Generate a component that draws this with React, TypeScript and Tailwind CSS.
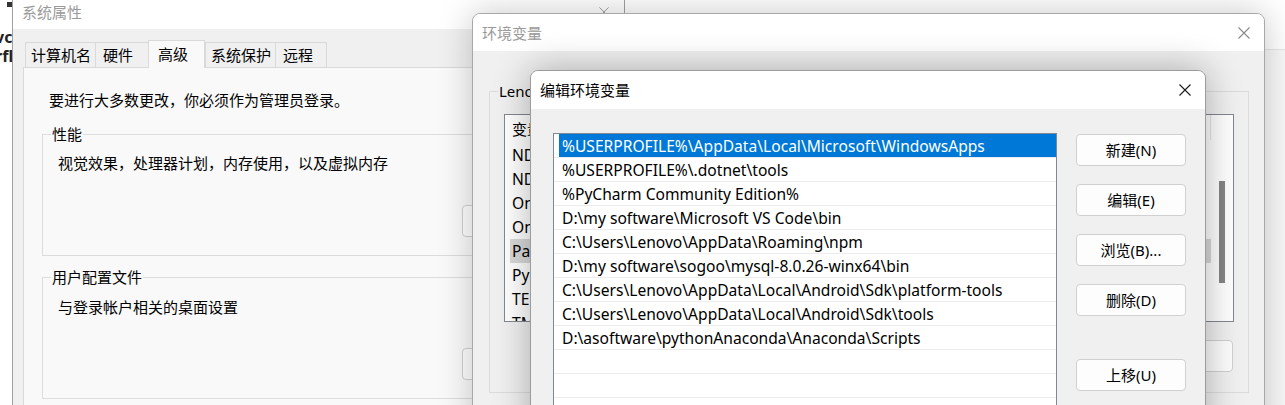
import type { ReactNode } from 'react';

function CloseX({ color, size = 12 }: { color: string; size?: number }) {
  return (
    <svg width={size} height={size} viewBox="0 0 12 12" fill="none">
      <path d="M0.5 0.5L11.5 11.5M11.5 0.5L0.5 11.5" stroke={color} strokeWidth="1.1" />
    </svg>
  );
}

function WinButton({ label, className = '' }: { label: string; className?: string }) {
  return (
    <div
      className={`h-[32px] shrink-0 rounded-[4px] border border-[#d0d0d0] bg-[#fdfdfd] flex items-center justify-center text-[15px] leading-[20px] ${className}`}
    >
      {label}
    </div>
  );
}

function GroupBox({
  label,
  labelBg,
  className = '',
  children,
}: {
  label: string;
  labelBg: string;
  className?: string;
  children?: ReactNode;
}) {
  return (
    <div className={`relative border border-[#dcdcdc] ${className}`}>
      <span className={`absolute left-[8px] top-[-11px] px-[1px] whitespace-nowrap text-[15px] leading-[20px] ${labelBg}`}>
        {label}
      </span>
      {children}
    </div>
  );
}

const tabs = [
  { name: '计算机名', w: 'w-[70px] pl-[5px]' },
  { name: '硬件', w: 'w-[53px] pl-[7px]' },
  { name: '高级', w: 'w-[57px] pl-[9px]', active: true },
  { name: '系统保护', w: 'w-[70px] pl-[5px]' },
  { name: '远程', w: 'w-[52px] pl-[7px] border-r' },
];

function SystemProperties() {
  return (
    <div className="absolute left-[12px] top-[-6px] w-[613px] h-[430px] border-x border-[#a0a0a0] bg-[#f0f0f0] flex flex-col">
      <div className="h-[35px] shrink-0 bg-white flex items-center justify-between pl-[9px] pr-[15px]">
        <span className="text-[15px] leading-[20px] text-[#9a9a9a]">系统属性</span>
        <CloseX color="#9a9a9a" size={10} />
      </div>
      <div className="px-[10px] pt-[11px]">
        <div className="relative z-10 flex items-end h-[28px] ml-[2px] -mb-px">
          {tabs.map((t) =>
            t.active ? (
              <div
                key={t.name}
                className={`h-[28px] border-x border-t border-[#d9d9d9] bg-[#f9f9f9] flex items-center text-[15px] leading-[20px] pb-[2px] ${t.w}`}
              >
                {t.name}
              </div>
            ) : (
              <div
                key={t.name}
                className={`h-[25px] mb-px border-l border-t border-[#d9d9d9] bg-[#f0f0f0] flex items-center text-[15px] leading-[20px] ${t.w}`}
              >
                {t.name}
              </div>
            )
          )}
        </div>
        <div className="h-[360px] border border-[#d9d9d9] bg-[#f9f9f9] pt-[22px]">
          <p className="pl-[25px] text-[15px] leading-[20px]">要进行大多数更改，你必须作为管理员登录。</p>
          <GroupBox label="性能" labelBg="bg-[#f9f9f9]" className="mt-[24px] ml-[18px] w-[552px] h-[122px] pt-[18px]">
            <p className="pl-[15px] text-[15px] leading-[20px]">视觉效果，处理器计划，内存使用，以及虚拟内存</p>
            <div className="flex justify-end pr-[18px] mt-[32px]">
              <WinButton label="设置(S)..." className="w-[113px]" />
            </div>
          </GroupBox>
          <GroupBox label="用户配置文件" labelBg="bg-[#f9f9f9]" className="mt-[21px] ml-[18px] w-[552px] h-[122px] pt-[19px]">
            <p className="pl-[15px] text-[15px] leading-[20px]">与登录帐户相关的桌面设置</p>
            <div className="flex justify-end pr-[18px] mt-[31px]">
              <WinButton label="设置(E)..." className="w-[113px]" />
            </div>
          </GroupBox>
        </div>
      </div>
    </div>
  );
}

const userVars = ['NDK_HOME', 'NDK_ROOT', 'OneDrive', 'OneDriveConsumer', 'Path', 'PyCharm Community Edition', 'TEMP', 'TMP'];

function EnvironmentVariables() {
  return (
    <div className="absolute left-[472px] top-[13px] w-[793px] h-[430px] rounded-t-[8px] border border-[#a8a8a8] bg-[#f0f0f0] shadow-[0_0_34px_rgba(0,0,0,0.22)] overflow-hidden flex flex-col">
      <div className="h-[37px] shrink-0 bg-white flex items-center justify-between pl-[9px] pr-[14px]">
        <span className="text-[15px] leading-[20px] text-[#9a9a9a]">环境变量</span>
        <CloseX color="#8a8a8a" />
      </div>
      <GroupBox label="Lenovo 的用户变量(U)" labelBg="bg-[#f0f0f0]" className="mt-[40px] ml-[16px] w-[760px] h-[302px] pt-[22px] pl-[14px]">
        <div className="w-[730px] h-[208px] border border-[#828790] bg-white flex overflow-hidden">
          <div className="flex-1 flex flex-col">
            <div className="h-[28px] shrink-0 flex items-center justify-between">
              <span className="pl-[7px] text-[15px] leading-[20px]">变量</span>
              <span className="w-px h-[25px] self-start bg-[#e5e5e5]" />
            </div>
            {userVars.map((v) => (
              <div key={v} className="h-[24px] shrink-0 flex">
                <div
                  className={`ml-[5px] flex-1 flex items-center pl-[2px] text-[15.6px] leading-[20px] whitespace-nowrap ${
                    v === 'Path' ? 'bg-[#d9d9d9]' : ''
                  }`}
                >
                  {v}
                </div>
              </div>
            ))}
          </div>
          <div className="w-[22px] shrink-0 pl-[8px] pt-[66px]">
            <div className="w-[6px] h-[102px] bg-[#858585]" />
          </div>
        </div>
        <div className="flex justify-end gap-[10px] pr-[15px] mt-[18px]">
          <WinButton label="新建(N)..." className="w-[120px]" />
          <WinButton label="编辑(E)..." className="w-[120px]" />
          <WinButton label="删除(D)" className="w-[120px]" />
        </div>
      </GroupBox>
    </div>
  );
}

const paths = [
  '%USERPROFILE%\\AppData\\Local\\Microsoft\\WindowsApps',
  '%USERPROFILE%\\.dotnet\\tools',
  '%PyCharm Community Edition%',
  'D:\\my software\\Microsoft VS Code\\bin',
  'C:\\Users\\Lenovo\\AppData\\Roaming\\npm',
  'D:\\my software\\sogoo\\mysql-8.0.26-winx64\\bin',
  'C:\\Users\\Lenovo\\AppData\\Local\\Android\\Sdk\\platform-tools',
  'C:\\Users\\Lenovo\\AppData\\Local\\Android\\Sdk\\tools',
  'D:\\asoftware\\pythonAnaconda\\Anaconda\\Scripts',
  '',
  '',
  '',
];

function EditEnvironmentVariable() {
  return (
    <div className="absolute left-[530px] top-[70px] w-[676px] h-[400px] rounded-t-[8px] border border-[#9c9c9c] bg-[#f0f0f0] shadow-[0_0_36px_rgba(0,0,0,0.3)] overflow-hidden flex flex-col">
      <div className="h-[38px] shrink-0 bg-white flex items-center justify-between pl-[9px] pr-[14px]">
        <span className="text-[15px] leading-[20px] text-black">编辑环境变量</span>
        <CloseX color="#1a1a1a" />
      </div>
      <div className="flex">
        <div className="ml-[22px] mt-[24px] w-[504px] h-[320px] border border-[#828790] bg-white flex flex-col overflow-hidden">
          {paths.map((p, i) => (
            <div key={i} className="h-[24px] shrink-0 border-b border-[#ececec] flex">
              <div
                className={`ml-[5px] flex-1 flex items-center pl-[3px] text-[15.6px] leading-[20px] whitespace-nowrap ${
                  i === 0 ? 'bg-[#0078d7] text-white' : 'text-black'
                }`}
              >
                {p}
              </div>
            </div>
          ))}
        </div>
        <div className="ml-[19px] mt-[25px] flex flex-col">
          <WinButton label="新建(N)" className="w-[110px]" />
          <WinButton label="编辑(E)" className="w-[110px] mt-[18px]" />
          <WinButton label="浏览(B)..." className="w-[110px] mt-[18px]" />
          <WinButton label="删除(D)" className="w-[110px] mt-[18px]" />
          <WinButton label="上移(U)" className="w-[110px] mt-[43px]" />
        </div>
      </div>
    </div>
  );
}

export default function App() {
  return (
    <div className="relative w-[1285px] h-[405px] overflow-hidden bg-white text-black font-[family-name:'Noto_Sans','Noto_Sans_CJK_SC',sans-serif]">
      {/* window behind, only a sliver shows at the right */}
      <div className="absolute left-[640px] top-0 w-[660px] h-[405px] flex flex-col">
        <div className="h-[50px] shrink-0 bg-white border-b border-[#e6e6e6]" />
        <div className="flex-1 bg-[#f8f8f8]" />
      </div>
      {/* desktop leftovers */}
      <div className="absolute left-[7px] top-[2px] w-[5px] h-[5px] bg-[#333]" />
      <div className="absolute left-[-5px] top-[28px] text-[16px] leading-[19px] font-bold text-[#222]">
        <p>vc</p>
        <p>rfl</p>
      </div>
      <SystemProperties />
      <EnvironmentVariables />
      <EditEnvironmentVariable />
    </div>
  );
}
